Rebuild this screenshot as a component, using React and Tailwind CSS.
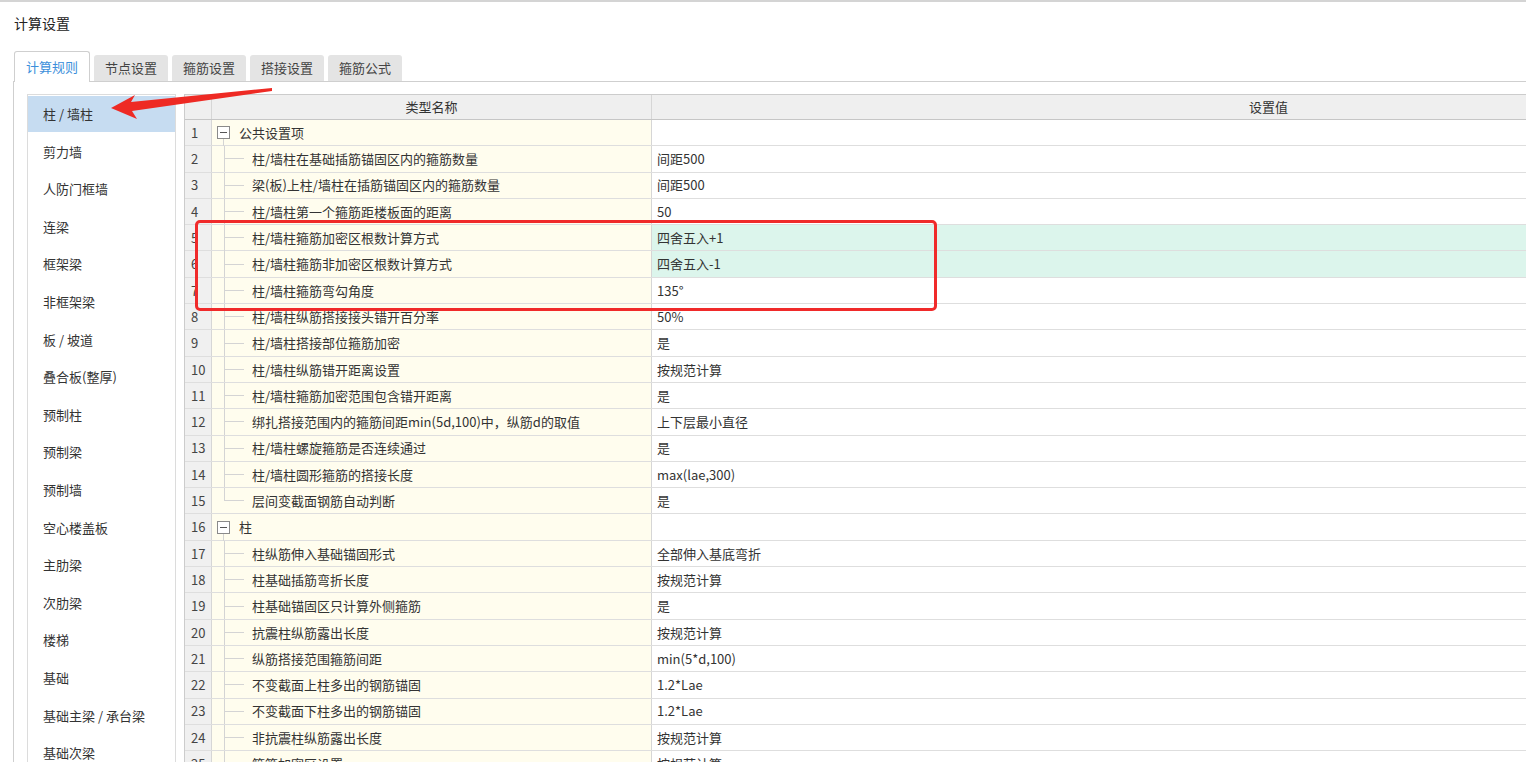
import React from "react";

const leftItems = [
  "柱 / 墙柱", "剪力墙", "人防门框墙", "连梁", "框架梁", "非框架梁", "板 / 坡道", "叠合板(整厚)",
  "预制柱", "预制梁", "预制墙", "空心楼盖板", "主肋梁", "次肋梁", "楼梯", "基础", "基础主梁 / 承台梁", "基础次梁",
];

const rows = [
  { g: true, n: "公共设置项", v: "" },
  { n: "柱/墙柱在基础插筋锚固区内的箍筋数量", v: "间距500" },
  { n: "梁(板)上柱/墙柱在插筋锚固区内的箍筋数量", v: "间距500" },
  { n: "柱/墙柱第一个箍筋距楼板面的距离", v: "50" },
  { n: "柱/墙柱箍筋加密区根数计算方式", v: "四舍五入+1", hl: true },
  { n: "柱/墙柱箍筋非加密区根数计算方式", v: "四舍五入-1", hl: true },
  { n: "柱/墙柱箍筋弯勾角度", v: "135°" },
  { n: "柱/墙柱纵筋搭接接头错开百分率", v: "50%" },
  { n: "柱/墙柱搭接部位箍筋加密", v: "是" },
  { n: "柱/墙柱纵筋错开距离设置", v: "按规范计算" },
  { n: "柱/墙柱箍筋加密范围包含错开距离", v: "是" },
  { n: "绑扎搭接范围内的箍筋间距min(5d,100)中，纵筋d的取值", v: "上下层最小直径" },
  { n: "柱/墙柱螺旋箍筋是否连续通过", v: "是" },
  { n: "柱/墙柱圆形箍筋的搭接长度", v: "max(lae,300)" },
  { n: "层间变截面钢筋自动判断", v: "是", last: true },
  { g: true, n: "柱", v: "" },
  { n: "柱纵筋伸入基础锚固形式", v: "全部伸入基底弯折" },
  { n: "柱基础插筋弯折长度", v: "按规范计算" },
  { n: "柱基础锚固区只计算外侧箍筋", v: "是" },
  { n: "抗震柱纵筋露出长度", v: "按规范计算" },
  { n: "纵筋搭接范围箍筋间距", v: "min(5*d,100)" },
  { n: "不变截面上柱多出的钢筋锚固", v: "1.2*Lae" },
  { n: "不变截面下柱多出的钢筋锚固", v: "1.2*Lae" },
  { n: "非抗震柱纵筋露出长度", v: "按规范计算" },
  { n: "箍筋加密区设置", v: "按规范计算" },
];

const tabs = ["节点设置", "箍筋设置", "搭接设置", "箍筋公式"];

export default function App() {
  return (
    <div
      className="relative w-[1526px] h-[762px] overflow-hidden bg-white text-[#333] text-[13px]"
      style={{ fontFamily: '"Noto Sans CJK SC", "Noto Sans", sans-serif' }}
    >
      <div className="h-[2px] bg-[#d4d4d4]" />
      <div className="pl-[14px] pt-[11px] h-[49px] text-[14px] leading-[20px] text-[#222]">计算设置</div>
      {/* tabs */}
      <div className="flex items-end gap-[4px] ml-[14px] h-[30px]">
        <div className="relative z-10 -mb-px w-[76px] h-[31px] flex items-center justify-center bg-white border border-b-0 border-[#cfcfcf] rounded-t-[3px] text-[#3d8fdb]">
          计算规则
        </div>
        {tabs.map((t) => (
          <div
            key={t}
            className="w-[74px] h-[26px] flex items-center justify-center bg-[#e4e4e4] rounded-t-[3px] text-[#444]"
          >
            {t}
          </div>
        ))}
      </div>
      {/* panel */}
      <div className="ml-[13px] border-l border-t border-[#cfcfcf] h-[700px] flex gap-[8px] pt-[12px] pl-[13px]">
        {/* left list */}
        <div className="w-[149px] shrink-0 border border-b-0 border-[#dcdcdc] pt-[1px]">
          {leftItems.map((it, i) => (
            <div key={it} className="h-[37.6px] flex items-start">
              <div
                className={
                  "w-full h-[35.5px] flex items-center pl-[15px] " +
                  (i === 0 ? "bg-[#c6dcf1]" : "")
                }
              >
                {it}
              </div>
            </div>
          ))}
        </div>
        {/* table */}
        <div className="flex-1 border-l border-t border-[#cccccc] flex flex-col">
          <div className="h-[25px] shrink-0 flex bg-[#efefef] border-b border-[#c6c6c6]">
            <div className="w-[27px] border-r border-[#d6d6d6]" />
            <div className="w-[440px] border-r border-[#d6d6d6] flex items-center justify-center">类型名称</div>
            <div className="flex-1 flex items-center pl-[597px]">设置值</div>
          </div>
          {rows.map((r, i) => (
            <div key={i} className="h-[26.3px] shrink-0 flex border-b border-[#dedede]">
              <div className="w-[27px] shrink-0 bg-[#f0f0f0] border-r border-[#d6d6d6] flex items-center pl-[6px] text-[#444]">
                {i + 1}
              </div>
              <div className="w-[440px] shrink-0 bg-[#fffdee] border-r border-[#d6d6d6] flex items-center">
                {r.g ? (
                  <>
                    <div className="relative ml-[5px] w-[13px] h-[13px] border border-[#8a8a8a] bg-white flex items-center justify-center">
                      <div className="w-[7px] h-px bg-[#555]" />
                      <div className="absolute left-[5px] top-[12px] w-px h-[7px] bg-[#d4d4d4]" />
                    </div>
                    <div className="ml-[9px]">{r.n}</div>
                  </>
                ) : (
                  <>
                    <div className="w-[12px] shrink-0" />
                    <div className="w-[20px] shrink-0 self-stretch flex flex-col">
                      <div className="flex-1 border-l border-b border-[#d4d4d4]" />
                      <div className={"flex-1 " + (r.last ? "" : "border-l border-[#d4d4d4]")} />
                    </div>
                    <div className="ml-[8px] whitespace-nowrap">{r.n}</div>
                  </>
                )}
              </div>
              <div className={"flex-1 flex items-center pl-[5px] " + (r.hl ? "bg-[#dcf5ec]" : "bg-white")}>
                {r.v}
              </div>
            </div>
          ))}
        </div>
      </div>
      {/* red highlight box */}
      <div className="absolute left-[195px] top-[220px] w-[742px] h-[91px] border-[3px] border-[#f02a2a] rounded-[5px]" />
      {/* red arrow */}
      <svg className="absolute left-0 top-0" width="300" height="130" viewBox="0 0 300 130">
        <polygon
          points="111,108 135,95 131,102 272,88 272,91 132,111 137,119"
          fill="#ee2a24"
        />
      </svg>
    </div>
  );
}
